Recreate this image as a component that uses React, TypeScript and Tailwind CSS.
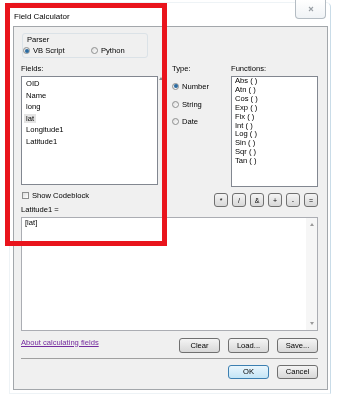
import React from "react";

// Win7 style radio button
function Radio({ checked = false }: { checked?: boolean }) {
  return (
    <span className="flex h-[7px] w-[7px] shrink-0 items-center justify-center rounded-full border border-[#8e8f8f] bg-linear-to-br from-[#dcdcdc] to-white">
      {checked && <span className="h-[4px] w-[4px] rounded-full bg-[#2a6aa0]" />}
    </span>
  );
}

function Btn({ label, focus = false, className = "" }: { label: string; focus?: boolean; className?: string }) {
  return (
    <div
      className={
        "flex items-center justify-center rounded-[3px] border " +
        (focus
          ? "border-[#3c7fb1] bg-linear-to-b from-[#eaf6fd] to-[#c4e5f6]"
          : "border-[#707070] bg-linear-to-b from-[#f4f4f4] to-[#d8d8d8]") +
        " " +
        className
      }
    >
      {label}
    </div>
  );
}

const fields = ["OID", "Name", "long", "lat", "Longitude1", "Latitude1"];
const functions = ["Abs ( )", "Atn ( )", "Cos ( )", "Exp ( )", "Fix ( )", "Int ( )", "Log ( )", "Sin ( )", "Sqr ( )", "Tan ( )"];
const ops = ["*", "/", "&", "+", "-", "="];

export default function App() {
  return (
    <div className="relative h-[400px] w-[338px] overflow-hidden bg-white font-['Liberation_Sans',Arial,sans-serif] text-[7.6px] leading-[9px] text-black will-change-transform">
      {/* window frame */}
      <div className="ml-[9px] mt-[2px] h-[392px] w-[322px] rounded-t-[5px] border border-[#eef3f6] border-r-[#c9dce8] pl-[3px] pr-[2px]">
        {/* title bar */}
        <div className="flex h-[23px] items-start">
          <span className="pl-[1px] pt-[9px] text-[8px]">Field Calculator</span>
          <div className="ml-auto mr-[2px] -mt-[3px] flex h-[19px] w-[31px] items-center justify-center rounded-b-[4px] border border-t-0 border-[#b4bcc3] bg-linear-to-b from-white to-[#f0f3f6]">
            <svg width="6" height="6" viewBox="0 0 6 6">
              <path d="M1 1 L5 5 M5 1 L1 5" stroke="#9aa0a6" strokeWidth="1.1" />
            </svg>
          </div>
        </div>

        {/* client area */}
        <div className="flex h-[364px] w-[315px] flex-col border border-[#a3a7ab] bg-[#f0f0f0] pl-[7px] pr-[9px]">
          {/* parser group */}
          <div className="ml-[1px] mt-[6px] h-[25px] w-[126px] rounded-[3px] border border-[#dbe2e7]">
            <div className="pl-[4px] pt-[1px]">Parser</div>
            <div className="mt-[2px] flex h-[9px] items-center">
              <div className="flex w-[68px] items-center gap-[3px]">
                <Radio checked />
                <span>VB Script</span>
              </div>
              <div className="flex items-center gap-[3px]">
                <Radio />
                <span>Python</span>
              </div>
            </div>
          </div>

          {/* fields / type / functions */}
          <div className="mt-[6px] flex">
            <div className="w-[137px]">
              <div className="h-[9px]">Fields:</div>
              <div className="mt-[3px] h-[109px] border border-[#828790] bg-white pl-[4px] pt-[1px] leading-[11.6px]">
                {fields.map((f) => (
                  <div key={f}>
                    {f === "lat" ? (
                      <span className="-ml-[2px] inline-block bg-[#e4e4e4] px-[2px] leading-[9px]">{f}</span>
                    ) : (
                      f
                    )}
                  </div>
                ))}
              </div>
            </div>
            <div className="w-[14px] pl-[1px] pt-[13px]">
              <svg width="4" height="3" viewBox="0 0 4 3">
                <path d="M0 3 L2 0 L4 3 Z" fill="#8a8a8a" />
              </svg>
            </div>
            <div className="flex w-[59px] flex-col">
              <div className="h-[9px]">Type:</div>
              <div className="mt-[8.5px] flex h-[9px] items-center gap-[3px]">
                <Radio checked />
                <span>Number</span>
              </div>
              <div className="mt-[9px] flex h-[9px] items-center gap-[3px]">
                <Radio />
                <span>String</span>
              </div>
              <div className="mt-[8px] flex h-[9px] items-center gap-[3px]">
                <Radio />
                <span>Date</span>
              </div>
            </div>
            <div className="w-[87px]">
              <div className="h-[9px]">Functions:</div>
              <div className="mt-[3px] h-[111px] border border-[#828790] bg-white pl-[3px] leading-[8.9px]">
                {functions.map((f) => (
                  <div key={f}>{f}</div>
                ))}
              </div>
            </div>
          </div>

          {/* codeblock + operators */}
          <div className="mt-[3.5px] flex items-start justify-between">
            <div className="flex flex-col">
              <div className="ml-[1px] flex h-[9px] items-center gap-[3px]">
                <span className="h-[7px] w-[7px] border border-[#8e8f8f] bg-linear-to-br from-[#dedede] to-white" />
                <span>Show Codeblock</span>
              </div>
              <div className="mt-[5.5px] h-[9px]">Latitude1 =</div>
            </div>
            <div className="mt-[2.5px] flex gap-[4px]">
              {ops.map((o) => (
                <Btn key={o} label={o} className="h-[14px] w-[14px] text-[7px]" />
              ))}
            </div>
          </div>

          {/* expression box */}
          <div className="mt-[2.5px] flex h-[114px] border border-[#abadb3] bg-white">
            <div className="flex-1 pl-[3px] pt-[0.5px]">[lat]</div>
            <div className="flex w-[11px] flex-col items-center justify-between bg-[#f6f6f6] py-[5px]">
              <svg width="4" height="3" viewBox="0 0 4 3">
                <path d="M0 3 L2 0 L4 3 Z" fill="#9a9a9a" />
              </svg>
              <svg width="4" height="3" viewBox="0 0 4 3">
                <path d="M0 0 L2 3 L4 0 Z" fill="#9a9a9a" />
              </svg>
            </div>
          </div>

          {/* link + clear/load/save */}
          <div className="mt-[7px] flex items-start justify-between">
            <span className="text-[#742a9e] underline">About calculating fields</span>
            <div className="flex gap-[8px]">
              <Btn label="Clear" className="h-[15px] w-[41px]" />
              <Btn label="Load..." className="h-[15px] w-[41px]" />
              <Btn label="Save..." className="h-[15px] w-[41px]" />
            </div>
          </div>

          <div className="mt-[5px] h-px bg-[#a0a0a0]" />

          <div className="mt-[6px] flex justify-end gap-[8px]">
            <Btn label="OK" focus className="h-[14px] w-[41px]" />
            <Btn label="Cancel" className="h-[14px] w-[41px]" />
          </div>
        </div>
      </div>

      {/* red highlight */}
      <div className="absolute left-[5px] top-[3px] h-[243px] w-[162px] border-[5px] border-[#e9141c]" />
    </div>
  );
}
